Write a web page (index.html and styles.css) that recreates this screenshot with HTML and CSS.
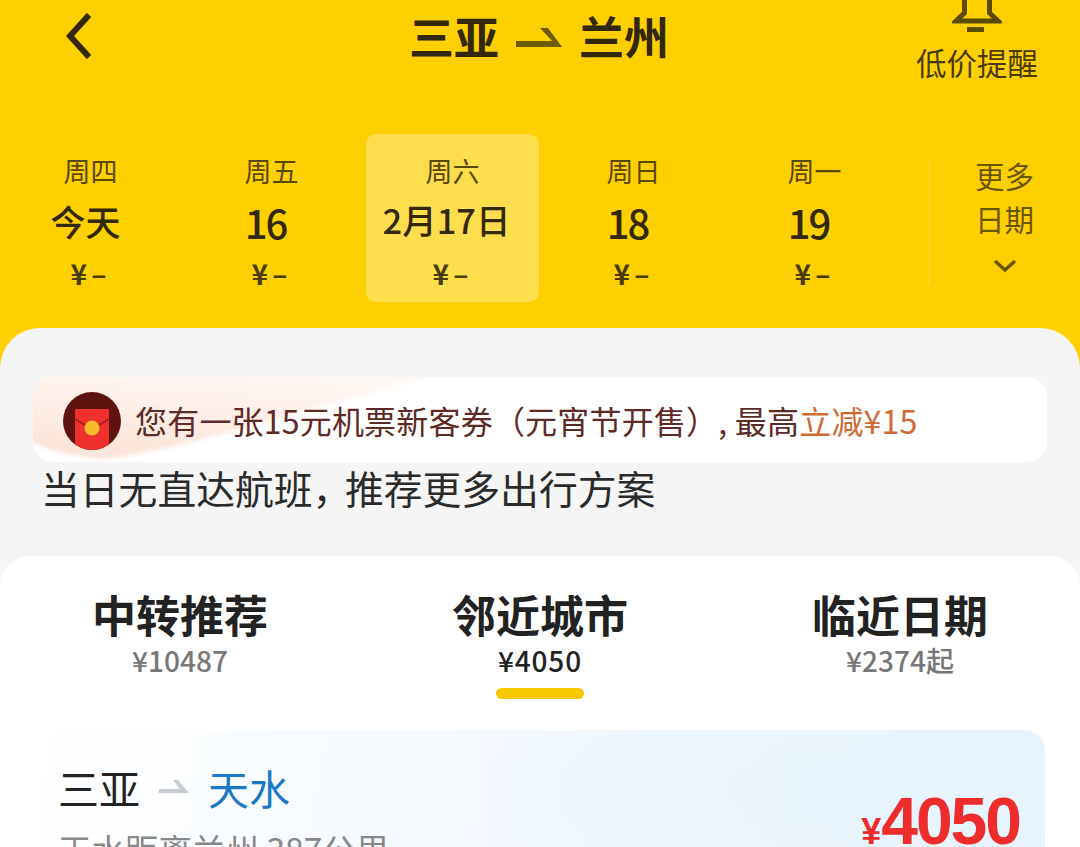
FILE: index.html
```html
<!DOCTYPE html>
<html lang="zh">
<head>
<meta charset="utf-8">
<title>三亚 兰州</title>
<link rel="stylesheet" href="styles.css">
</head>
<body>
<div class="page">
  <header class="head">
    <div class="topbar">
      <svg class="back" width="30" height="46" viewBox="0 0 30 46"><path d="M25 2 6 23l19 21" fill="none" stroke="#33290a" stroke-width="6"/></svg>
      <div class="route">
        <span>三亚</span>
        <svg width="46" height="20" viewBox="0 0 46 20"><path d="M0 14H36L24 1H32L46 20H0Z" fill="#6f5a00"/></svg>
        <span>兰州</span>
      </div>
      <div class="alert">
        <svg width="50" height="34" viewBox="0 0 50 34"><path d="M12.500 -3V13L4 21H46L37.500 13V-3" fill="none" stroke="#5c4a00" stroke-width="5"/><rect x="15" y="27" width="17" height="5" fill="#5c4a00"/></svg>
        <span>低价提醒</span>
      </div>
    </div>
    <div class="dates">
      <div class="day"><span class="wk">周四</span><span class="dt cn">今天</span><span class="pr">¥–</span></div>
      <div class="day"><span class="wk">周五</span><span class="dt">16</span><span class="pr">¥–</span></div>
      <div class="day sel"><span class="wk">周六</span><span class="dt full">2月17日</span><span class="pr">¥–</span></div>
      <div class="day"><span class="wk">周日</span><span class="dt">18</span><span class="pr">¥–</span></div>
      <div class="day"><span class="wk">周一</span><span class="dt">19</span><span class="pr">¥–</span></div>
      <div class="more">
        <span>更多</span><span>日期</span>
        <svg width="24" height="16" viewBox="0 0 24 16"><path d="M2 3l10 9 10-9" fill="none" stroke="#6b5600" stroke-width="3.500"/></svg>
      </div>
    </div>
  </header>
  <main class="panel">
    <div class="coupon">
      <svg class="swoosh" width="1014" height="85" viewBox="0 0 1014 85" preserveAspectRatio="none">
        <defs>
          <linearGradient id="peach" x1="0.3" y1="0" x2="0" y2="1">
            <stop offset="0" stop-color="#fff7f3"/>
            <stop offset="1" stop-color="#fbe1d5"/>
          </linearGradient>
          <filter id="soft"><feGaussianBlur stdDeviation="2"/></filter>
        </defs>
        <path d="M-6 -6H420C300 22 160 72 70 82 40 80 15 72 -6 64Z" fill="url(#peach)" filter="url(#soft)"/>
      </svg>
      <svg class="packet" width="58" height="58" viewBox="0 0 58 58">
        <circle cx="29" cy="29" r="29" fill="#5e1310"/>
        <path d="M12 18q0-1 1-1H45q1 0 1 1V52Q38 58 29 58T12 52Z" fill="#f0302c"/>
        <path d="M12 27 29 37 46 27" fill="none" stroke="#a8201c" stroke-width="2"/>
        <circle cx="29" cy="36" r="7.500" fill="#f8b92c"/>
      </svg>
      <p class="coupon-text">您有一张15元机票新客券（元宵节开售）, 最高<em>立减¥15</em></p>
    </div>
    <p class="notice">当日无直达航班<span class="comma">，</span>推荐更多出行方案</p>
    <section class="card">
      <div class="tabs">
        <div class="tab"><strong>中转推荐</strong><span>¥10487</span></div>
        <div class="tab active"><strong>邻近城市</strong><span>¥4050</span><i></i></div>
        <div class="tab"><strong>临近日期</strong><span>¥2374起</span></div>
      </div>
      <div class="offer">
        <div class="offer-info">
          <div class="offer-route">
            <span>三亚</span>
            <svg width="30" height="14" viewBox="0 0 30 14"><path d="M0 9H21L14 0H19L30 13H0Z" fill="#c8ccd0"/></svg>
            <span class="city">天水</span>
          </div>
          <p class="dist">天水距离兰州 387公里</p>
        </div>
        <div class="price"><small>¥</small>4050</div>
      </div>
    </section>
  </main>
</div>
</body>
</html>
```
FILE: styles.css
```css
* { box-sizing: border-box; }
html, body { margin: 0; padding: 0; }
body { font-family: "Noto Sans CJK SC", "Noto Sans", sans-serif; background: #f5f5f5; }
.page { width: 1080px; height: 847px; overflow: hidden; background: #ffd000; }
.head { height: 328px; background: #ffd000; color: #3a2f08; }
.topbar { height: 134px; display: flex; align-items: flex-start; padding-left: 64px; position: relative; }
.back { margin-top: 13px; }
.route { position: absolute; left: 409px; top: 6px; display: flex; align-items: center; gap: 17px; font-size: 45px; line-height: 60px; font-weight: 700; color: #33290a; }
.route svg { margin-top: 2px; }
.alert { position: absolute; left: 916px; top: 0; width: 122px; display: flex; flex-direction: column; align-items: center; }
.alert span { font-size: 30.500px; line-height: 44px; margin-top: 6px; white-space: nowrap; color: #4a3c08; }
.dates { display: flex; align-items: flex-start; }
.day { width: 181px; height: 168px; display: flex; flex-direction: column; align-items: center; border-radius: 10px; color: #4a3c08; }
.day.sel { background: #ffde4d; width: 173px; margin: 0 4px; }
.wk { font-size: 27px; line-height: 36px; margin-top: 19px; color: #5a4806; }
.dt { font-size: 40px; line-height: 56px; height: 60px; margin: 5px 12px 0 0; font-weight: 500; letter-spacing: -2px; color: #33290a; }
.dt.cn { font-size: 35px; letter-spacing: 0; margin: 4px 10px 0 0; height: 61px; }
.dt.full { font-size: 34.500px; letter-spacing: 0; margin: 2px 12px 0 0; height: 63px; white-space: nowrap; }
.pr { font-size: 28px; line-height: 36px; margin-top: 1px; letter-spacing: 4px; font-weight: 700; color: #4a3c08; }
.more { margin-left: 23px; margin-top: 28px; width: 151px; height: 123px; border-left: 2px solid #ffd526; display: flex; flex-direction: column; align-items: center; color: #6b5600; font-size: 29.500px; line-height: 43px; }
.more svg { margin-top: 18px; }
.more span:first-child { margin-top: -8px; }
.panel { height: 519px; background: #f5f5f5; border-radius: 40px 40px 0 0; padding-top: 49px; }
.coupon { margin: 0 33px; height: 85px; border-radius: 20px; display: flex; align-items: center; gap: 15px; padding-left: 30px; background: #fff; position: relative; overflow: hidden; }
.swoosh { position: absolute; left: 0; top: 0; }
.packet { flex: none; margin-top: 2px; position: relative; }
.coupon-text { margin: 0 0 0 -1px; font-size: 32px; line-height: 44px; letter-spacing: 0.200px; color: #5e2a26; white-space: nowrap; position: relative; }
.coupon-text em { font-style: normal; color: #cf6a34; }
.notice { margin: -3px 0 0 41px; font-size: 38.800px; line-height: 56px; color: #2a2a2a; height: 94px; white-space: nowrap; }
.comma { letter-spacing: -6.500px; }
.card { background: #fff; border-radius: 30px 30px 0 0; height: 300px; margin-top: 3px; }
.tabs { display: flex; height: 174px; padding-top: 30px; }
.tab { flex: 1; display: flex; flex-direction: column; align-items: center; position: relative; }
.tab strong { font-size: 44px; line-height: 56px; font-weight: 700; color: #222; }
.tab span { font-size: 28px; line-height: 36px; color: #777; font-weight: 500; }
.tab.active span { color: #222; letter-spacing: 0.800px; }
.tab i { width: 88px; height: 11px; border-radius: 6px; background: #f9c800; margin-top: 10px; }
.offer { margin: 0 35px 0 38px; height: 200px; border-radius: 20px 20px 0 0; background: radial-gradient(ellipse 420px 130px at 85% 30%, #e8f4fd 0, rgba(232,244,253,0) 100%), linear-gradient(100deg, #ffffff 0, #f5fafe 35%, #e6f3fd 100%); display: flex; justify-content: space-between; padding: 27px 25px 0 20px; }
.offer-route { display: flex; align-items: center; gap: 19px; font-size: 41px; line-height: 60px; color: #222; }
.city { color: #1a78c8; }
.dist { margin: 12px 0 0; font-size: 33.500px; line-height: 40px; color: #888; white-space: nowrap; }
.price { font-family: "Liberation Sans", sans-serif; font-weight: 700; font-size: 66px; line-height: 70px; letter-spacing: -2px; color: #ee2c2c; margin-top: 29px; }
.price small { font-size: 36px; letter-spacing: 0; }
```
